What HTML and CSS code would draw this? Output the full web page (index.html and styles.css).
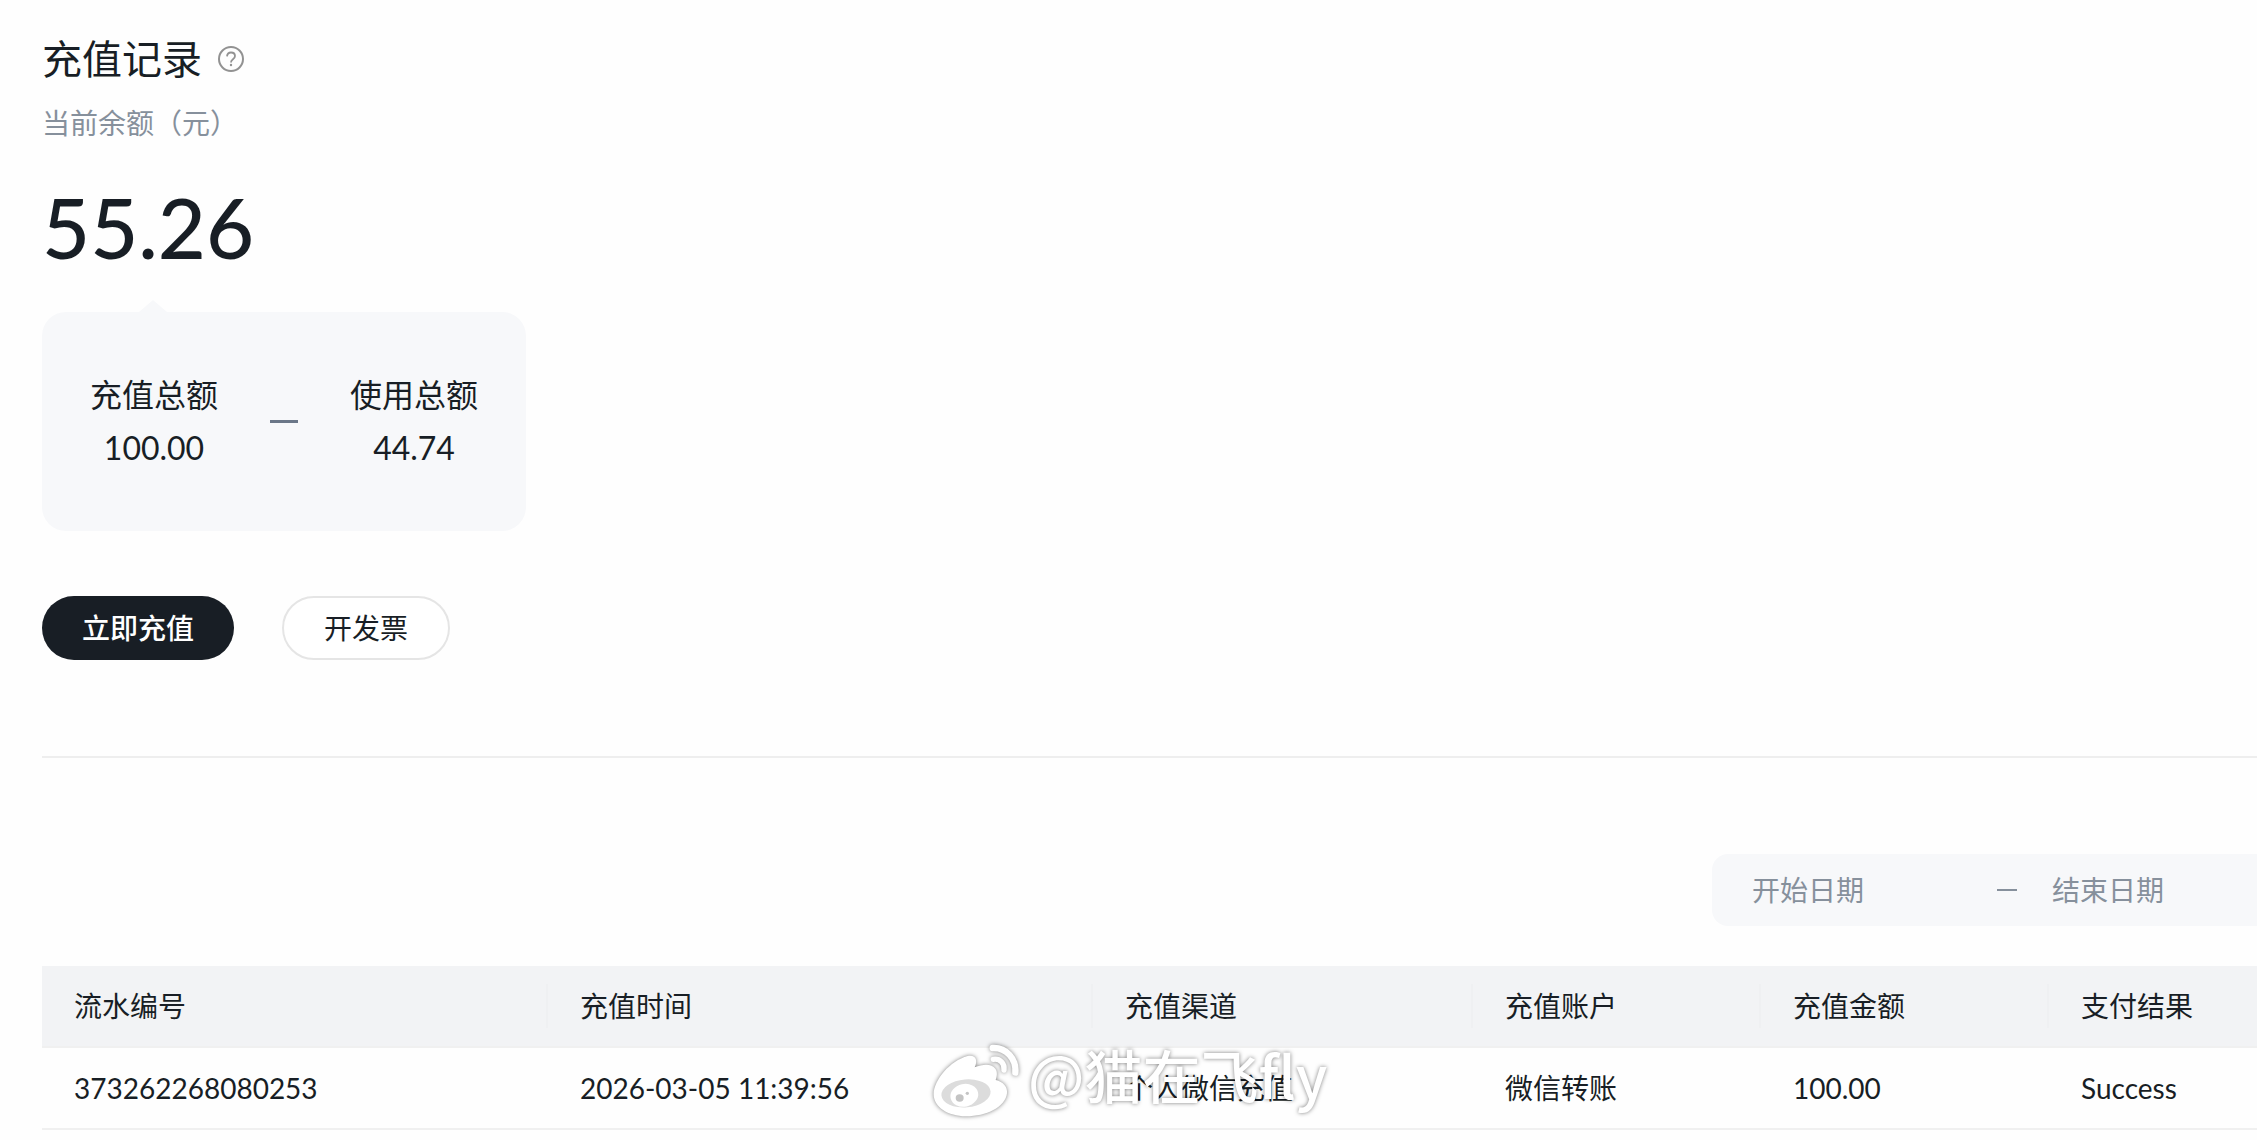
FILE: index.html
```html
<!DOCTYPE html>
<html lang="zh-CN">
  <head>
    <meta charset="UTF-8" />
    <meta name="viewport" content="width=device-width, initial-scale=1.0" />
    <title>充值记录</title>
    <link rel="stylesheet" href="styles.css">
  </head>
  <body>
    <main class="page">
      <div class="title-row">
        <h1>充值记录</h1>
        <button type="button" class="help" aria-label="帮助">
          <svg viewBox="0 0 26 26" width="26" height="26" fill="none" stroke="currentColor">
            <circle cx="13" cy="13" r="12" stroke-width="2" />
            <path d="M9 10.4c.2-2.4 1.8-3.9 4-3.9s4 1.4 4 3.5c0 1.900-1.200 2.600-2.300 3.400-1.100.8-1.700 1.300-1.700 3" stroke-width="1.8" />
            <circle cx="13" cy="19" r="1.2" fill="currentColor" stroke="none" />
          </svg>
        </button>
      </div>
      <p class="subtitle">当前余额（元）</p>
      <p class="balance">55.26</p>

      <section class="summary">
        <div class="summary-item">
          <span>充值总额</span>
          <span>100.00</span>
        </div>
        <i class="minus"></i>
        <div class="summary-item">
          <span>使用总额</span>
          <span>44.74</span>
        </div>
      </section>

      <div class="actions">
        <button type="button" class="btn btn-primary">立即充值</button>
        <button type="button" class="btn">开发票</button>
      </div>

      <hr class="divider" />

      <div class="filter">
        <div class="date-range">
          <input type="text" placeholder="开始日期" aria-label="开始日期" />
          <i class="range-dash"></i>
          <input type="text" placeholder="结束日期" aria-label="结束日期" />
        </div>
      </div>

      <table class="records">
        <colgroup>
          <col class="col-id" />
          <col class="col-time" />
          <col class="col-channel" />
          <col class="col-short" />
          <col class="col-short" />
          <col />
        </colgroup>
        <thead>
          <tr>
            <th>流水编号</th>
            <th>充值时间</th>
            <th>充值渠道</th>
            <th>充值账户</th>
            <th>充值金额</th>
            <th>支付结果</th>
          </tr>
        </thead>
        <tbody>
          <tr>
            <td>373262268080253</td>
            <td>2026-03-05 11:39:56</td>
            <td>个人微信充值</td>
            <td>微信转账</td>
            <td>100.00</td>
            <td>Success</td>
          </tr>
        </tbody>
      </table>

      <div class="watermark">
        <svg viewBox="90 60 282 237" width="94" height="79">
          <path fill="#fff" d="M101 222C102 180 150 122 203 108C228 103 234 122 224 142C252 130 276 132 286 146C293 156 291 168 287 180C310 186 323 200 321 220C316 262 258 289 198 289C144 288 101 262 101 222Z" />
          <ellipse cx="198" cy="220" rx="74" ry="42" fill="#dcdcdc" transform="rotate(-5 198 220)" />
          <ellipse cx="193" cy="226" rx="42" ry="34" fill="#fff" transform="rotate(-12 193 226)" />
          <ellipse cx="179" cy="234" rx="12" ry="11" fill="#c4c4c4" />
          <circle cx="202" cy="220" r="5" fill="#c4c4c4" />
          <path d="M278 84C318 82 350 116 346 158" fill="none" stroke="#fff" stroke-width="19" stroke-linecap="round" />
          <path d="M280 118C300 115 315 130 312 150" fill="none" stroke="#fff" stroke-width="16" stroke-linecap="round" />
        </svg>
        <span>@猫在飞fly</span>
      </div>
    </main>
  </body>
</html>
```
FILE: styles.css
```css
* {
  box-sizing: border-box;
}

body {
  margin: 0;
  background: #fefefe;
  color: #181e25;
  font-family: Lato, "Noto Sans CJK SC", sans-serif;
  font-size: 28px;
  line-height: 40px;
}

button,
input {
  font: inherit;
  color: inherit;
}

.page {
  position: relative;
  padding: 31px 0 0 42px;
}

.title-row {
  display: flex;
  align-items: center;
  gap: 16px;
}

h1 {
  margin: 0;
  font-size: 40px;
  font-weight: 400;
  line-height: 56px;
}

.help {
  display: flex;
  padding: 0;
  border: 0;
  background: none;
  color: #929292;
  cursor: pointer;
}

.subtitle {
  margin: 16px 0 0;
  color: #86909c;
}

.balance {
  margin: 40px 0 0;
  font-size: 83px;
  font-weight: 500;
  line-height: 88px;
}

/* Summary card */
.summary {
  position: relative;
  display: flex;
  align-items: center;
  gap: 52px;
  width: fit-content;
  margin-top: 41px;
  padding: 57px 48px;
  border-radius: 24px;
  background: #f7f8fa;
  font-size: 32px;
  line-height: 52px;
}

/* Arrow pointing at the balance */
.summary::before {
  content: "";
  position: absolute;
  top: -12px;
  left: 97px;
  border: 14px solid transparent;
  border-top: 0;
  border-bottom: 12px solid #f7f8fa;
}

.summary-item {
  display: flex;
  flex-direction: column;
  align-items: center;
  gap: 1px;
}

.minus {
  width: 28px;
  height: 3px;
  background: #6b7788;
}

.actions {
  display: flex;
  gap: 48px;
  margin-top: 65px;
}

.btn {
  height: 64px;
  padding: 0 40px;
  border: 2px solid #e5e5e5;
  border-radius: 32px;
  background: #fff;
  cursor: pointer;
}

.btn-primary {
  border: 0;
  background: #181e25;
  color: #fff;
  font-weight: 500;
}

.divider {
  height: 2px;
  margin: 96px 0;
  border: 0;
  background: #eeeeee;
}

/* Date filter */
.filter {
  display: flex;
  justify-content: flex-end;
}

.date-range {
  display: flex;
  align-items: center;
  height: 72px;
  padding-left: 40px;
  border-radius: 16px 0 0 16px;
  background: #f7f8fa;
}

.date-range input {
  width: 205px;
  padding: 0;
  border: 0;
  outline: 0;
  background: none;
}

.date-range input::placeholder {
  color: #86909c;
  opacity: 1;
}

.range-dash {
  width: 20px;
  height: 2px;
  margin: 0 35px 0 40px;
  background: #86909c;
}

/* Records table */
.records {
  width: 100%;
  margin-top: 40px;
  border-collapse: separate;
  border-spacing: 0;
  table-layout: fixed;
  text-align: left;
}

.col-id {
  width: 506px;
}

.col-time {
  width: 545px;
}

.col-channel {
  width: 380px;
}

.col-short {
  width: 288px;
}

.records th,
.records td {
  position: relative;
  padding: 20px 32px;
  border-bottom: 2px solid #f0f0f0;
  font-weight: 400;
  white-space: nowrap;
}

.records th {
  background: #f2f3f5;
}

.records th:not(:last-child)::after {
  content: "";
  position: absolute;
  top: 18px;
  right: 0;
  width: 2px;
  height: 44px;
  background: #eff0f2;
}

.watermark {
  position: absolute;
  top: 1040px;
  left: 930px;
  display: flex;
  align-items: flex-start;
  gap: 4px;
  color: #fff;
  font-family: "Noto Sans CJK SC", sans-serif;
  font-size: 58px;
  font-weight: 500;
  line-height: 68px;
  white-space: nowrap;
  pointer-events: none;
  filter: drop-shadow(0 0 2px rgba(0, 0, 0, 0.5));
}
```
